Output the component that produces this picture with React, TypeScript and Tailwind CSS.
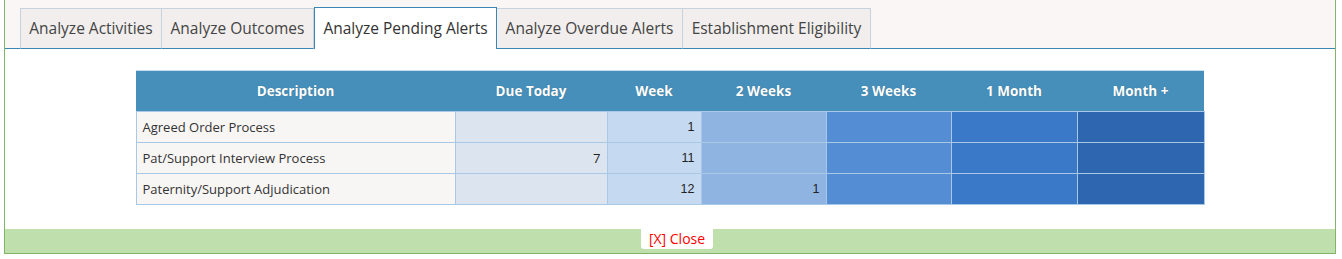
const tabs = [
  { label: "Analyze Activities", width: "w-[142px]" },
  { label: "Analyze Outcomes", width: "w-[152px]" },
  { label: "Analyze Pending Alerts", width: "w-[183px]" },
  { label: "Analyze Overdue Alerts", width: "w-[186px]" },
  { label: "Establishment Eligibility", width: "w-[188px]" },
];

const columns = [
  { label: "Description", width: "w-[319px]" },
  { label: "Due Today", width: "w-[152px]" },
  { label: "Week", width: "w-[94px]" },
  { label: "2 Weeks", width: "w-[125px]" },
  { label: "3 Weeks", width: "w-[125px]" },
  { label: "1 Month", width: "w-[126px]" },
  { label: "Month +", width: "w-[127px]" },
];

const bucketColors = [
  "bg-[#dce5ef]",
  "bg-[#c5d9f0]",
  "bg-[#8fb4e2]",
  "bg-[#548dd4]",
  "bg-[#3a78c8]",
  "bg-[#2f66b0]",
];

const rows = [
  { description: "Agreed Order Process", values: ["", "1", "", "", "", ""] },
  { description: "Pat/Support Interview Process", values: ["7", "11", "", "", "", ""] },
  { description: "Paternity/Support Adjudication", values: ["", "12", "1", "", "", ""] },
];

export default function App() {
  const active = 2;
  return (
    <div className="w-[1342px] h-[259px] bg-white font-['Open_Sans',sans-serif]">
      <div className="ml-[4px] w-[1332px] h-[254px] border-x border-b border-[#82b56a] flex flex-col">
        {/* Tabs */}
        <div className="h-[49px] bg-[#f9f6f5] border-b border-[#3a87b5] pl-[15px] pt-[8px] flex items-end">
          {tabs.map((tab, i) =>
            i === active ? (
              <div
                key={tab.label}
                className={`${tab.width} h-[42px] -mb-px -mt-px bg-white border-x border-t border-[#3a87b5] text-[15.5px] text-[#333] flex items-center justify-center`}
              >
                {tab.label}
              </div>
            ) : (
              <div
                key={tab.label}
                className={`${tab.width} h-[41px] -mb-px bg-[#f1eeed] border border-[#c6d2de] border-b-[#3a87b5] text-[15.5px] text-[#444] flex items-center justify-center ${
                  i > 0 ? "border-l-0" : ""
                }`}
              >
                {tab.label}
              </div>
            )
          )}
        </div>

        {/* Table */}
        <div className="flex-1 pt-[21px]">
          <table className="mx-auto w-[1068px] border-collapse table-fixed">
            <thead>
              <tr className="h-[41px] bg-[#468fba] border-t border-[#c9ddee]">
                {columns.map((c) => (
                  <th
                    key={c.label}
                    className={`${c.width} pt-px text-center text-[13.5px] font-bold text-white [text-shadow:0_0_1px_rgba(0,0,0,0.3)]`}
                  >
                    {c.label}
                  </th>
                ))}
              </tr>
            </thead>
            <tbody>
              {rows.map((r) => (
                <tr key={r.description} className="h-[31px]">
                  <td className="bg-[#f7f6f5] border border-[#a9c8e6] pl-[6px] pt-px text-[13px] text-[#333]">
                    {r.description}
                  </td>
                  {r.values.map((v, j) => (
                    <td
                      key={j}
                      className={`${bucketColors[j]} border border-[#a9c8e6] text-right pr-[6px] pt-px text-[#222] ${
                        j === 0 ? "text-[13px]" : "font-['Liberation_Sans',sans-serif] text-[12.5px]"
                      }`}
                    >
                      {v}
                    </td>
                  ))}
                </tr>
              ))}
            </tbody>
          </table>
        </div>

        {/* Footer */}
        <div className="h-[24px] bg-[#bfe0ac] flex justify-center">
          <div className="ml-[14px] h-[20px] px-[8px] bg-white rounded-b-[3px] text-[14px] leading-[20px] text-[#ff0000]">
            [X] Close
          </div>
        </div>
      </div>
    </div>
  );
}
